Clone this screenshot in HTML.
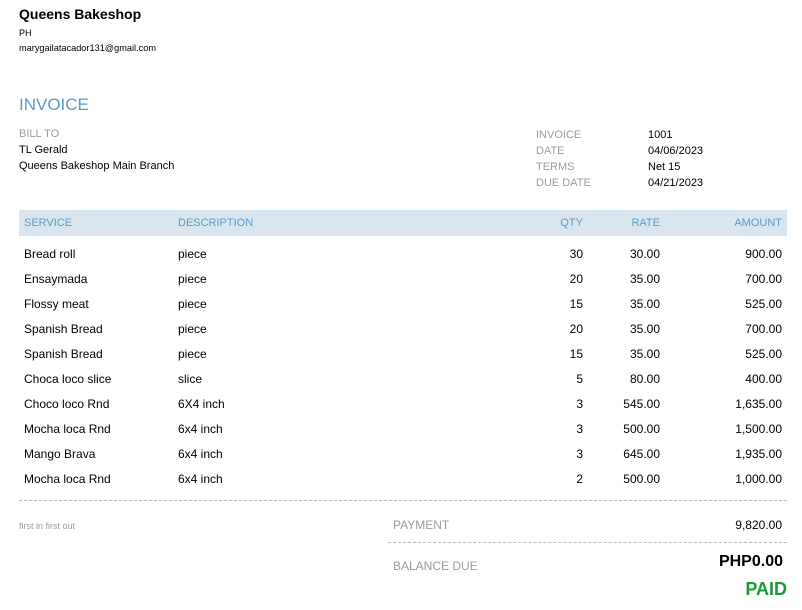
<!DOCTYPE html>
<html><head><meta charset="utf-8"><style>
body{margin:0;width:802px;height:610px;background:#fff;font-family:"Liberation Sans",sans-serif;color:#000;position:relative;overflow:hidden}
.a{position:absolute;white-space:nowrap}
.g{color:#9a9aa4}
.b{color:#5a9bc9}
.r{text-align:right}
.f12{font-size:12px}
</style></head><body>
<div class="a" style="left:19px;top:6px;font-size:14px;font-weight:bold">Queens Bakeshop</div>
<div class="a" style="left:19px;top:28px;font-size:9px">PH</div>
<div class="a" style="left:19px;top:43px;font-size:9.2px">marygailatacador131@gmail.com</div>
<div class="a b" style="left:19px;top:95px;font-size:17px">INVOICE</div>
<div class="a g" style="left:19px;top:128px;font-size:11px">BILL TO</div>
<div class="a" style="left:19px;top:144px;font-size:11px">TL Gerald</div>
<div class="a" style="left:19px;top:160px;font-size:11px">Queens Bakeshop Main Branch</div>
<div class="a g" style="left:536px;top:127px;font-size:11px;line-height:16px">INVOICE<br>DATE<br>TERMS<br>DUE DATE</div>
<div class="a" style="left:648px;top:127px;font-size:11px;line-height:16px">1001<br>04/06/2023<br>Net 15<br>04/21/2023</div>
<div class="a" style="left:19px;top:210px;width:768px;height:26px;background:#dae6ef"></div>
<div class="a b" style="left:24px;top:217px;font-size:11px">SERVICE</div>
<div class="a b" style="left:178px;top:217px;font-size:11px">DESCRIPTION</div>
<div class="a b r" style="left:500px;width:83px;top:217px;font-size:11px">QTY</div>
<div class="a b r" style="left:560px;width:100px;top:217px;font-size:11px">RATE</div>
<div class="a b r" style="left:680px;width:102px;top:217px;font-size:11px">AMOUNT</div>
<div class="a f12" style="left:24px;top:242px;line-height:25px">Bread roll<br>Ensaymada<br>Flossy meat<br>Spanish Bread<br>Spanish Bread<br>Choca loco slice<br>Choco loco Rnd<br>Mocha loca Rnd<br>Mango Brava<br>Mocha loca Rnd</div>
<div class="a f12" style="left:178px;top:242px;line-height:25px">piece<br>piece<br>piece<br>piece<br>piece<br>slice<br>6X4 inch<br>6x4 inch<br>6x4 inch<br>6x4 inch</div>
<div class="a f12 r" style="left:500px;width:83px;top:242px;line-height:25px">30<br>20<br>15<br>20<br>15<br>5<br>3<br>3<br>3<br>2</div>
<div class="a f12 r" style="left:560px;width:100px;top:242px;line-height:25px">30.00<br>35.00<br>35.00<br>35.00<br>35.00<br>80.00<br>545.00<br>500.00<br>645.00<br>500.00</div>
<div class="a f12 r" style="left:680px;width:102px;top:242px;line-height:25px">900.00<br>700.00<br>525.00<br>700.00<br>525.00<br>400.00<br>1,635.00<br>1,500.00<br>1,935.00<br>1,000.00</div>
<div class="a" style="left:19px;top:500px;width:768px;border-top:1px dashed #bbb"></div>
<div class="a g" style="left:19px;top:521px;font-size:9px">first in first out</div>
<div class="a g" style="left:393px;top:518px;font-size:12px">PAYMENT</div>
<div class="a r" style="left:680px;width:102px;top:518px;font-size:12px">9,820.00</div>
<div class="a" style="left:388px;top:542px;width:399px;border-top:1px dashed #bbb"></div>
<div class="a g" style="left:393px;top:559px;font-size:12px">BALANCE DUE</div>
<div class="a r" style="left:640px;width:143px;top:553px;font-size:16px;font-weight:bold">PHP0.00</div>
<div class="a r" style="left:640px;width:147px;top:579px;font-size:18px;font-weight:bold;color:#1a9a3a">PAID</div>
</body></html>
